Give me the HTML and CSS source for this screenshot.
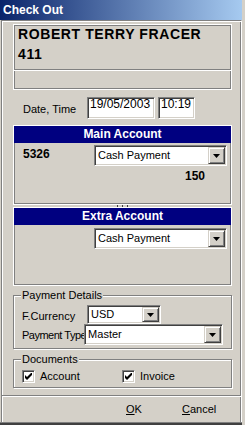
FILE: index.html
```html
<!DOCTYPE html>
<html>
<head>
<meta charset="utf-8">
<link rel="stylesheet" href="styles.css">
</head>
<body>
<div class="window">
  <div class="titlebar">Check Out</div>
  <div class="frame">
    <div class="client">
      <div class="infobox">
        <div class="info-top">
          <div class="names">
            <div class="name">ROBERT TERRY FRACER</div>
            <div class="name">411</div>
          </div>
        </div>
        <div class="info-bottom"></div>
      </div>

      <div class="daterow">
        <span class="date-label">Date, Time</span>
        <div class="edit date">19/05/2003</div>
        <div class="edit time">10:19</div>
      </div>

      <div class="acct main">
        <div class="acct-head">Main Account</div>
        <div class="acct-row">
          <span class="acct-no">5326</span>
          <div class="combo c-acct">
            <span class="combo-text">Cash Payment</span>
            <span class="drop"><svg width="7" height="4" viewBox="0 0 7 4"><polygon points="0,0 7,0 3.5,4" fill="#000"/></svg></span>
          </div>
        </div>
        <div class="amount">150</div>
      </div>
      <div class="grip"><i></i><i></i><i></i></div>
      <div class="acct extra">
        <div class="acct-head">Extra Account</div>
        <div class="acct-row extra-row">
          <div class="combo c-acct">
            <span class="combo-text">Cash Payment</span>
            <span class="drop"><svg width="7" height="4" viewBox="0 0 7 4"><polygon points="0,0 7,0 3.5,4" fill="#000"/></svg></span>
          </div>
        </div>
      </div>

      <fieldset class="group pay">
        <legend>Payment Details</legend>
        <div class="prow">
          <span class="plabel l-cur">F.Currency</span>
          <div class="combo c-usd">
            <span class="combo-text">USD</span>
            <span class="drop"><svg width="7" height="4" viewBox="0 0 7 4"><polygon points="0,0 7,0 3.5,4" fill="#000"/></svg></span>
          </div>
        </div>
        <div class="prow">
          <span class="plabel l-type">Payment Type</span>
          <div class="combo c-master">
            <span class="combo-text">Master</span>
            <span class="drop"><svg width="7" height="4" viewBox="0 0 7 4"><polygon points="0,0 7,0 3.5,4" fill="#000"/></svg></span>
          </div>
        </div>
      </fieldset>

      <fieldset class="group docs">
        <legend>Documents</legend>
        <div class="docrow">
          <label class="docitem"><span class="check"><svg width="7" height="7" viewBox="0 0 7 7"><polygon points="0,2 2,4 7,-1 7,2 2,7 0,5" fill="#000"/></svg></span>Account</label>
          <label class="docitem"><span class="check"><svg width="7" height="7" viewBox="0 0 7 7"><polygon points="0,2 2,4 7,-1 7,2 2,7 0,5" fill="#000"/></svg></span>Invoice</label>
        </div>
      </fieldset>
    </div>
    <div class="separator"></div>
    <div class="buttons">
      <span class="btn"><u>O</u>K</span>
      <span class="btn"><u>C</u>ancel</span>
    </div>
  </div>
  <div class="bottomedge"></div>
</div>
</body>
</html>
```
FILE: styles.css
```css
* { box-sizing: border-box; }
html, body { margin: 0; padding: 0; }
body {
  background: #d4d0c8;
  font-family: "Liberation Sans", Arial, sans-serif;
  font-size: 11px;
  color: #000;
  width: 245px;
  height: 425px;
  overflow: hidden;
}
.window {
  width: 242px;
  height: 425px;
  display: flex;
  flex-direction: column;
}
.titlebar {
  flex: none;
  height: 20px;
  background: linear-gradient(to right, #0a246a, #a6caf0);
  color: #fff;
  font-weight: bold;
  font-size: 12px;
  line-height: 20px;
  padding-left: 3px;
}
.frame {
  flex: none;
  height: 402px;
  margin-left: 1px;
  display: flex;
  flex-direction: column;
  border-left: 1px solid #808080;
  border-top: 1px solid #808080;
  border-right: 1px solid #fff;
  box-shadow: inset 1px 1px 0 #fff, inset -1px 0 0 #808080;
}
.client {
  flex: none;
  height: 374px;
  padding: 3px 9px 0 11px;
  display: flex;
  flex-direction: column;
}
.infobox {
  height: 66px;
  border: 1px solid #fff;
  box-shadow: inset 1px 1px 0 #808080, inset -1px -1px 0 #808080;
  display: flex;
  flex-direction: column;
}
.info-top {
  height: 45px;
  border-bottom: 1px solid #808080;
  padding-left: 4px;
}
.names { margin-top: -1px; }
.name {
  font-weight: bold;
  font-size: 14px;
  line-height: 20px;
  letter-spacing: 0.6px;
  white-space: nowrap;
}
.info-bottom {
  flex: 1;
  box-shadow: inset 0 1px 0 #fff;
}
.daterow {
  display: flex;
  margin-top: 7px;
  padding-left: 10px;
  height: 22px;
}
.date-label {
  width: 64px;
  padding-top: 6px;
  line-height: 13px;
}
.edit {
  height: 22px;
  background: #fff;
  border: 1px solid;
  border-color: #808080 #fff #fff #808080;
  box-shadow: inset 1px 1px 0 #404040, inset -1px -1px 0 #d4d0c8;
  font-size: 12px;
  line-height: 11px;
  padding: 1px 0 0 2px;
  white-space: nowrap;
}
.edit.date { width: 68px; }
.edit.time { width: 37px; margin-left: 3px; }

.acct {
  border: 1px solid #fff;
  box-shadow: inset 1px 1px 0 #808080, inset -1px -1px 0 #808080;
  display: flex;
  flex-direction: column;
}
.acct.main { margin-top: 6px; height: 80px; }
.acct.extra { height: 79px; }
.acct-head {
  height: 17px;
  background: #000080;
  color: #fff;
  font-weight: bold;
  font-size: 12px;
  line-height: 17px;
  text-align: center;
}
.acct-row {
  display: flex;
  margin-top: 2px;
  padding-left: 9px;
}
.acct-row.extra-row { margin-top: 3px; padding-left: 80px; }
.acct-no {
  width: 71px;
  font-weight: bold;
  font-size: 12px;
  line-height: 14px;
  padding-top: 2px;
}
.amount {
  margin-top: 3px;
  padding-right: 26px;
  text-align: right;
  font-weight: bold;
  font-size: 12px;
  line-height: 14px;
}
.grip {
  height: 2px;
  display: flex;
  justify-content: center;
  gap: 4px;
}
.grip i {
  display: block;
  width: 1px;
  height: 2px;
  background: #404040;
}

.combo {
  display: flex;
  height: 21px;
  background: #fff;
  border: 1px solid;
  border-color: #808080 #fff #fff #808080;
  box-shadow: inset 1px 1px 0 #404040, inset -1px -1px 0 #d4d0c8;
  padding: 1px;
}
.combo-text {
  flex: 1;
  padding-left: 2px;
  line-height: 17px;
  white-space: nowrap;
  overflow: hidden;
}
.drop {
  flex: none;
  width: 17px;
  display: flex;
  align-items: center;
  justify-content: center;
  background: #d4d0c8;
  border: 1px solid;
  border-color: #d4d0c8 #404040 #404040 #d4d0c8;
  box-shadow: inset 1px 1px 0 #fff, inset -1px -1px 0 #808080;
}
.drop svg { display: block; }
.c-acct { width: 133px; }
.c-usd { width: 74px; height: 19px; }
.c-usd .combo-text { line-height: 15px; }
.c-master { width: 143px; height: 21px; }

.group {
  margin: 0;
  min-width: 0;
  padding: 3px 8px 3px 8px;
  border: 1px solid #808080;
  box-shadow: inset 1px 1px 0 #fff, 1px 1px 0 #fff;
}
.group legend {
  padding: 0 1px;
  margin-left: -1px;
  background: #d4d0c8;
  line-height: 13px;
  font-size: 11px;
}
.group.pay { margin-top: 3px; }
.group.docs { margin-top: 4px; padding-top: 4px; padding-bottom: 4px; }
.prow { display: flex; }
.plabel {
  padding-top: 5px;
  line-height: 13px;
  white-space: nowrap;
  overflow: hidden;
}
.l-cur { width: 65px; }
.l-type { width: 64px; letter-spacing: -0.5px; }

.docrow { display: flex; }
.docitem {
  display: flex;
  align-items: center;
  gap: 5px;
  width: 100px;
  line-height: 13px;
}
.check {
  flex: none;
  width: 13px;
  height: 13px;
  background: #fff;
  border: 1px solid;
  border-color: #808080 #fff #fff #808080;
  box-shadow: inset 1px 1px 0 #404040, inset -1px -1px 0 #d4d0c8;
  display: flex;
  align-items: center;
  justify-content: center;
}
.check svg { display: block; }

.separator {
  flex: none;
  height: 2px;
  border-top: 1px solid #808080;
  border-bottom: 1px solid #fff;
}
.buttons {
  flex: 1;
  display: flex;
  padding: 6px 0 0 124px;
}
.btn {
  width: 56px;
  line-height: 13px;
}
.btn u { text-decoration: underline; }
.bottomedge {
  flex: none;
  height: 3px;
  border-top: 1px solid #808080;
  background: #404040;
}
```
